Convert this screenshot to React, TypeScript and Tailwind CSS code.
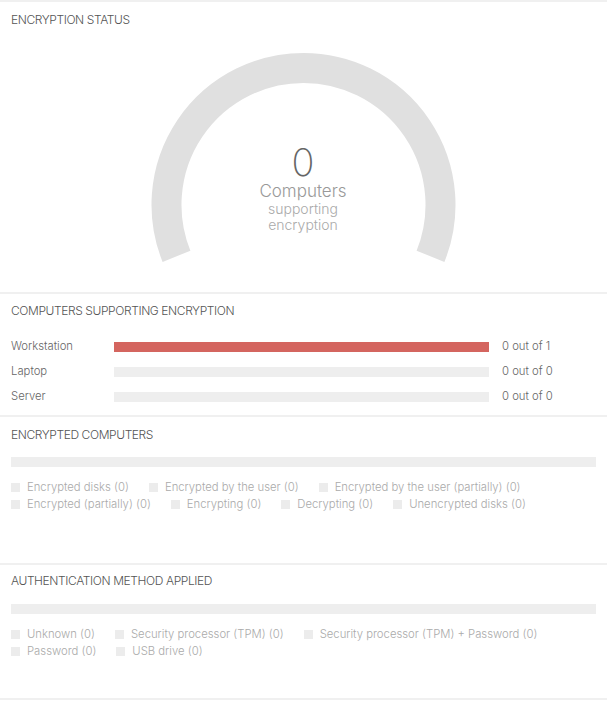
const font = { fontFamily: 'Inter, "Noto Sans", sans-serif' };

function Title({ children }: { children: string }) {
  return <div className="text-[12px] leading-[14px] text-[#555] uppercase tracking-[-0.4px]">{children}</div>;
}

function Legend({ items }: { items: string[] }) {
  return (
    <div className="flex items-center gap-x-[20px] h-[17px]">
      {items.map((t) => (
        <div key={t} className="flex items-center gap-[7px]">
          <span className="w-[9px] h-[9px] bg-[#ececec]" />
          <span className="text-[11.3px] text-[#aaa] whitespace-nowrap">{t}</span>
        </div>
      ))}
    </div>
  );
}

const rows = [
  { label: 'Workstation', value: '0 out of 1', red: true },
  { label: 'Laptop', value: '0 out of 0', red: false },
  { label: 'Server', value: '0 out of 0', red: false },
];

export default function App() {
  return (
    <div className="w-full bg-white font-light" style={font}>
      <div className="border-t-2 border-[#f0f0f0] h-[292px] px-[11px] pt-[11px]">
        <Title>Encryption Status</Title>
        <div className="relative mx-auto mt-[18px] w-[320px] h-[230px] -translate-x-[0.5px]">
          <svg width="320" height="230" viewBox="0 0 320 230">
            <path d="M 33 211.3 A 137 137 0 1 1 287 211.3" fill="none" stroke="#e0e0e0" strokeWidth="30" />
          </svg>
          <div className="absolute inset-x-0 top-[97px] flex flex-col items-center">
            <div className="text-[38px] leading-[40px] text-[#666] font-extralight">0</div>
            <div className="text-[17px] leading-[19px] text-[#999]">Computers</div>
            <div className="text-[14px] leading-[16px] text-[#aaa]">supporting</div>
            <div className="text-[14px] leading-[16px] text-[#aaa]">encryption</div>
          </div>
        </div>
      </div>

      <div className="border-t-2 border-[#f0f0f0] h-[123px] px-[11px] pt-[10px]">
        <Title>Computers supporting encryption</Title>
        <div className="mt-[16px]">
          {rows.map((r) => (
            <div key={r.label} className="flex items-center h-[25px] text-[11.3px] text-[#666]">
              <span className="w-[103px]">{r.label}</span>
              <span className={`w-[375px] h-[10px] ${r.red ? 'bg-[#d4655f]' : 'bg-[#eeeeee]'}`} />
              <span className="ml-[13px]">{r.value}</span>
            </div>
          ))}
        </div>
      </div>

      <div className="border-t-2 border-[#f0f0f0] h-[148px] px-[11px] pt-[11px]">
        <Title>Encrypted computers</Title>
        <div className="mt-[15px] h-[10px] bg-[#eeeeee]" />
        <div className="mt-[12px]">
          <Legend items={['Encrypted disks (0)', 'Encrypted by the user (0)', 'Encrypted by the user (partially) (0)']} />
          <Legend items={['Encrypted (partially) (0)', 'Encrypting (0)', 'Decrypting (0)', 'Unencrypted disks (0)']} />
        </div>
      </div>

      <div className="border-t-2 border-[#f0f0f0] h-[135px] px-[11px] pt-[9px]">
        <Title>Authentication method applied</Title>
        <div className="mt-[16px] h-[10px] bg-[#eeeeee]" />
        <div className="mt-[12px]">
          <Legend items={['Unknown (0)', 'Security processor (TPM) (0)', 'Security processor (TPM) + Password (0)']} />
          <Legend items={['Password (0)', 'USB drive (0)']} />
        </div>
      </div>
      <div className="border-t-2 border-[#f0f0f0] h-[28px]" />
    </div>
  );
}
